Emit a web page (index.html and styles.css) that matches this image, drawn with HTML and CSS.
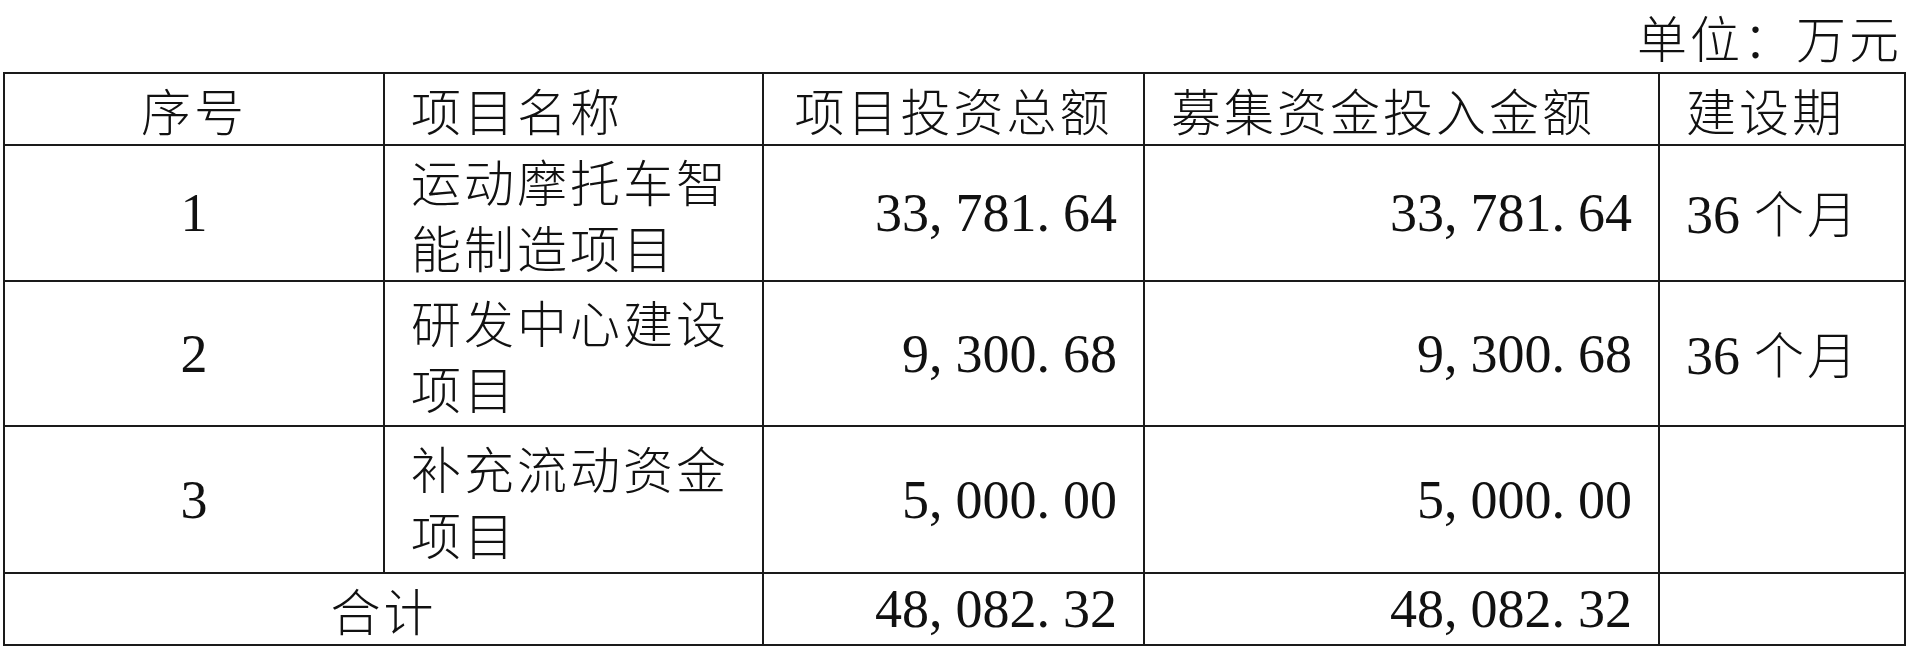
FILE: index.html
```html
<!DOCTYPE html>
<html lang="zh-CN">
<head>
<meta charset="utf-8">
<title>募集资金投资项目</title>
<link rel="stylesheet" href="styles.css">
</head>
<body>
<div class="page">
  <div class="unit">单位：万元</div>
  <table class="tbl">
    <colgroup>
      <col class="c1"><col class="c2"><col class="c3"><col class="c4"><col class="c5">
    </colgroup>
    <thead>
      <tr class="head">
        <th class="center">序号</th>
        <th class="left">项目名称</th>
        <th class="center">项目投资总额</th>
        <th class="left">募集资金投入金额</th>
        <th class="left">建设期</th>
      </tr>
    </thead>
    <tbody>
      <tr class="r1">
        <td class="center num">1</td>
        <td class="left name">运动摩托车智能制造项目</td>
        <td class="right num">33<span class="pu">,</span>781<span class="pu">.</span>64</td>
        <td class="right num">33<span class="pu">,</span>781<span class="pu">.</span>64</td>
        <td class="left"><span class="num">36</span><span class="sp"></span>个月</td>
      </tr>
      <tr class="r2">
        <td class="center num">2</td>
        <td class="left name">研发中心建设项目</td>
        <td class="right num">9<span class="pu">,</span>300<span class="pu">.</span>68</td>
        <td class="right num">9<span class="pu">,</span>300<span class="pu">.</span>68</td>
        <td class="left"><span class="num">36</span><span class="sp"></span>个月</td>
      </tr>
      <tr class="r3">
        <td class="center num">3</td>
        <td class="left name">补充流动资金项目</td>
        <td class="right num">5<span class="pu">,</span>000<span class="pu">.</span>00</td>
        <td class="right num">5<span class="pu">,</span>000<span class="pu">.</span>00</td>
        <td class="left"></td>
      </tr>
      <tr class="total">
        <td class="center" colspan="2">合计</td>
        <td class="right num">48<span class="pu">,</span>082<span class="pu">.</span>32</td>
        <td class="right num">48<span class="pu">,</span>082<span class="pu">.</span>32</td>
        <td class="left"></td>
      </tr>
    </tbody>
  </table>
</div>
</body>
</html>
```

FILE: styles.css
```css
html, body {
  margin: 0;
  padding: 0;
  background: #ffffff;
}

body {
  font-family: "Noto Sans CJK SC", "Noto Sans CJK JP", sans-serif;
  color: #111111;
  font-weight: 300;
}

.page {
  width: 1909px;
  padding: 0 0 0 3px;
  box-sizing: border-box;
}

.unit {
  height: 72px;
  line-height: 72px;
  font-size: 50px;
  letter-spacing: 3px;
  text-align: right;
  padding-right: 7px;
  box-sizing: border-box;
}

.tbl {
  width: 1901px;
  border-collapse: collapse;
  table-layout: fixed;
}

.c1 { width: 380px; }
.c2 { width: 379px; }
.c3 { width: 381px; }
.c4 { width: 515px; }
.c5 { width: 246px; }

.tbl th,
.tbl td {
  border: 2px solid #1a1a1a;
  font-size: 50px;
  letter-spacing: 3px;
  line-height: 70px;
  font-weight: 300;
  padding: 0 26px 0 26px;
  vertical-align: middle;
}

.head th { height: 69px; }
.r1 td { height: 134px; }
.r2 td { height: 143px; }
.r3 td { height: 145px; }
.total td { height: 70px; }

.center { text-align: center; }
.left { text-align: left; }
.right { text-align: right; }

.tbl td.name {
  padding-right: 20px;
  line-height: 66px;
}

.num {
  font-family: "Liberation Serif", serif;
  font-size: 54px;
  letter-spacing: 0;
}

.tbl td.num {
  font-size: 54px;
  letter-spacing: 0;
}

.pu {
  letter-spacing: 13px;
}

.sp {
  display: inline-block;
  width: 14px;
}
```
